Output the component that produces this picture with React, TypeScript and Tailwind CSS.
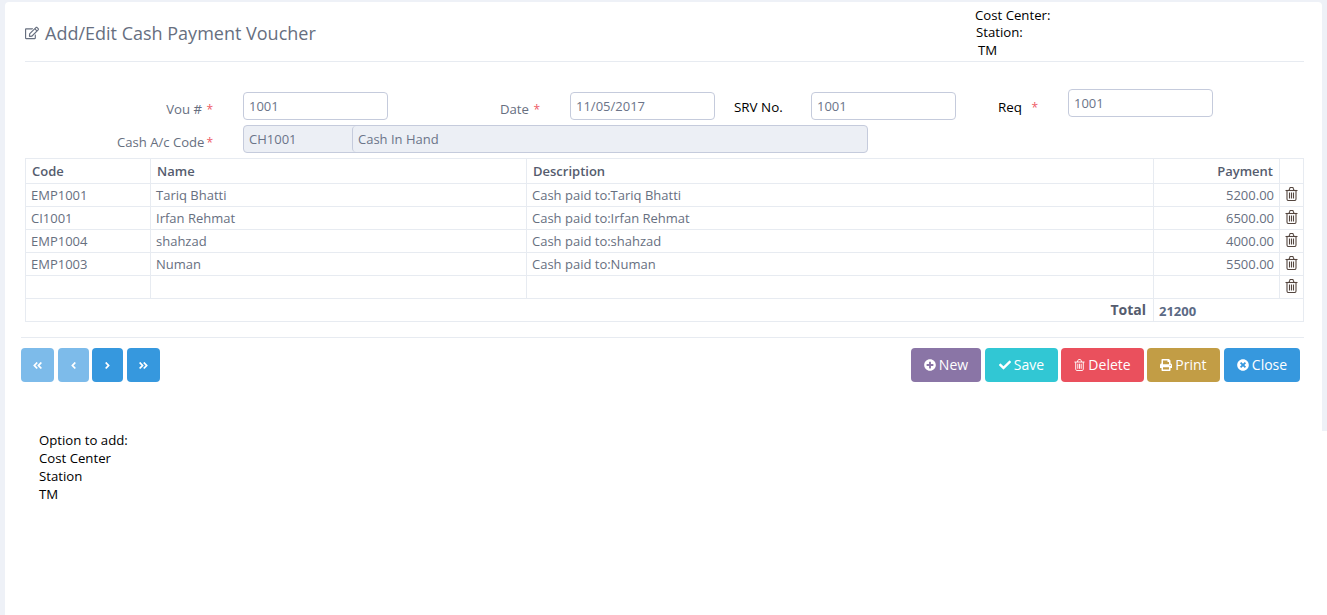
import React from "react";
import {
  FaRegEdit,
  FaPlusCircle,
  FaCheck,
  FaPrint,
  FaTimesCircle,
  FaAngleDoubleLeft,
  FaAngleDoubleRight,
  FaAngleLeft,
  FaAngleRight,
} from "react-icons/fa";

const font = "font-['Open_Sans','Noto_Sans',sans-serif]";

const rows = [
  ["EMP1001", "Tariq Bhatti", "Cash paid to:Tariq Bhatti", "5200.00"],
  ["CI1001", "Irfan Rehmat", "Cash paid to:Irfan Rehmat", "6500.00"],
  ["EMP1004", "shahzad", "Cash paid to:shahzad", "4000.00"],
  ["EMP1003", "Numan", "Cash paid to:Numan", "5500.00"],
  ["", "", "", ""],
];

function Trash({ className }: { className: string }) {
  return (
    <svg viewBox="0 0 13 14" fill="none" stroke="currentColor" strokeWidth="1.1" className={className}>
      <path d="M0.5 3.5H12.5" />
      <path d="M4 3.5L4.8 1.2C4.9 0.8 5.2 0.5 5.6 0.5H7.4C7.8 0.5 8.1 0.8 8.2 1.2L9 3.5" />
      <path d="M2 3.5V12C2 12.9 2.6 13.5 3.3 13.5H9.7C10.4 13.5 11 12.9 11 12V3.5" />
      <path d="M4.5 5.5V11.5M6.5 5.5V11.5M8.5 5.5V11.5" />
    </svg>
  );
}

function Field({ value, className }: { value: string; className: string }) {
  return (
    <div className={`h-[28px] w-[145px] shrink-0 rounded-[4px] border border-[#c5cbdc] bg-white pl-[5px] text-[13px] leading-[27px] text-[#6b7489] ${className}`}>
      {value}
    </div>
  );
}

function Star() {
  return <span className="text-[12px] text-[#ee5a66]">*</span>;
}

function NavBtn({ light, w, children }: { light?: boolean; w: string; children: React.ReactNode }) {
  return (
    <div className={`flex h-[34px] items-center justify-center rounded-[4px] text-[11px] text-white ${light ? "bg-[#7dbbea]" : "bg-[#3698de]"} ${w}`}>
      {children}
    </div>
  );
}

function ActBtn({ color, w, icon, label }: { color: string; w: string; icon: React.ReactNode; label: string }) {
  return (
    <div className={`flex h-[34px] items-center justify-center gap-[3px] rounded-[4px] pb-[1px] text-[14px] text-white ${color} ${w}`}>
      {icon}
      <span>{label}</span>
    </div>
  );
}

const cell = "border border-[#e7ebf1] pt-[2px] align-middle";

export default function App() {
  return (
    <div className={`min-h-[615px] bg-white ${font}`}>
      <div className="h-[431px] bg-[#eef1f7] pl-[5px] pr-[5px] pt-[2px]">
        <div className="h-[429px] rounded-t-[4px] bg-white pl-[16px] pr-[18px]">
          <div className="ml-[4px] flex h-[60px] items-start justify-between border-b border-[#e7ebf1]">
            <div className="mt-[18px] flex items-center gap-[6px] text-[18px] leading-[26px] text-[#676f7f]">
              <FaRegEdit className="text-[14px]" />
              <span>Add/Edit Cash Payment Voucher</span>
            </div>
            <div className="mr-[206px] w-[123px] pt-[5px] text-[13.2px] leading-[17.5px] text-black">
              <div>Cost Center:</div>
              <div className="-mt-[1px] pl-[1px]">Station:</div>
              <div className="mt-[1px] pl-[3px]">TM</div>
            </div>
          </div>

          <div className="mt-[27px] flex h-[36px] items-start text-[13px] text-[#676f7f]">
            <div className="mt-[10px] w-[222px] shrink-0 pr-[30px] text-right text-[13.2px] leading-[20px]">
              Vou # <span className="ml-[1px]"><Star /></span>
            </div>
            <Field value="1001" className="mt-[3px]" />
            <div className="mt-[10px] w-[182px] shrink-0 pr-[30px] text-right text-[13.2px] leading-[20px]">
              Date <span className="ml-[1px]"><Star /></span>
            </div>
            <Field value="11/05/2017" className="mt-[3px]" />
            <div className="mt-[8px] w-[96px] shrink-0 pl-[19px] text-[13.4px] font-medium leading-[20px] text-black">SRV No.</div>
            <Field value="1001" className="mt-[3px]" />
            <div className="mt-[8px] w-[112px] shrink-0 pl-[42px] text-[13.4px] font-medium leading-[20px] text-black">
              Req <span className="ml-[6px] font-normal"><Star /></span>
            </div>
            <Field value="1001" />
          </div>

          <div className="flex h-[33px] items-start text-[13px] text-[#676f7f]">
            <div className="mt-[7px] w-[222px] shrink-0 pr-[30px] text-right text-[13.1px] leading-[20px]">
              Cash A/c Code<span className="ml-[2px]"><Star /></span>
            </div>
            <div className="flex h-[28px] w-[625px] rounded-[4px] border border-[#c5cbdc] bg-[#ecEff5] leading-[26px] text-[#6b7489]">
              <div className="w-[108px] pl-[5px]">CH1001</div>
              <div className="flex-1 rounded-l-[4px] border-l border-[#c5cbdc] pl-[5px]">Cash In Hand</div>
            </div>
          </div>

          <table className="ml-[4px] w-[1278px] table-fixed border-collapse text-[13px] text-[#676f7f]">
            <colgroup>
              <col className="w-[125px]" />
              <col className="w-[376px]" />
              <col className="w-[627px]" />
              <col className="w-[126px]" />
              <col className="w-[24px]" />
            </colgroup>
            <thead>
              <tr className="h-[25px] font-semibold text-[#555c6e]">
                <th className={`${cell} px-[6px] text-left font-semibold`}>Code</th>
                <th className={`${cell} px-[6px] text-left font-semibold`}>Name</th>
                <th className={`${cell} px-[6px] text-left font-semibold`}>Description</th>
                <th className={`${cell} px-[6px] text-right font-semibold`}>Payment</th>
                <th className={cell}></th>
              </tr>
            </thead>
            <tbody>
              {rows.map((r, i) => (
                <tr key={i} className="h-[23px]">
                  <td className={`${cell} px-[5px]`}>{r[0]}</td>
                  <td className={`${cell} px-[5px]`}>{r[1]}</td>
                  <td className={`${cell} px-[5px]`}>{r[2]}</td>
                  <td className={`${cell} px-[5px] text-right`}>{r[3]}</td>
                  <td className="border border-[#e7ebf1] pb-[2px] pl-[5px] align-middle">
                    <Trash className="h-[14px] w-[13px] text-[#54463f]" />
                  </td>
                </tr>
              ))}
              <tr className="h-[23px]">
                <td colSpan={3} className="border border-[#e7ebf1] px-[7px] align-middle text-right text-[14px] leading-[20px] font-bold text-[#555c6e]">Total</td>
                <td colSpan={2} className="border border-[#e7ebf1] px-[5px] pt-[1px] align-middle text-[13px] leading-[20px] font-bold text-[#5b6a85]">21200</td>
              </tr>
            </tbody>
          </table>

          <div className="mt-[15px] border-t border-[#e7ebf1] pt-[10px] pr-[4px]">
            <div className="flex items-center justify-between">
              <div className="flex">
                <NavBtn light w="w-[33px] mr-[4px]"><FaAngleDoubleLeft /></NavBtn>
                <NavBtn light w="w-[31px] mr-[3px]"><FaAngleLeft /></NavBtn>
                <NavBtn w="w-[31px] mr-[4px]"><FaAngleRight /></NavBtn>
                <NavBtn w="w-[33px]"><FaAngleDoubleRight /></NavBtn>
              </div>
              <div className="flex">
                <ActBtn color="bg-[#8a75a6] mr-[4px]" w="w-[70px]" icon={<FaPlusCircle className="text-[12px]" />} label="New" />
                <ActBtn color="bg-[#31c7d4] mr-[3px]" w="w-[73px]" icon={<FaCheck className="text-[12px]" />} label="Save" />
                <ActBtn color="bg-[#ea505d] mr-[3px]" w="w-[83px]" icon={<Trash className="h-[12px] w-[11px]" />} label="Delete" />
                <ActBtn color="bg-[#c29d45] mr-[4px]" w="w-[73px]" icon={<FaPrint className="text-[12px]" />} label="Print" />
                <ActBtn color="bg-[#3698de]" w="w-[76px]" icon={<FaTimesCircle className="text-[12px]" />} label="Close" />
              </div>
            </div>
          </div>
        </div>
      </div>
      <div className="h-[184px] bg-[#eef1f7] pl-[5px]">
        <div className="h-full bg-white pl-[34px] text-[13.2px] leading-[18px] text-black">
          <div>Option to add:</div>
          <div>Cost Center</div>
          <div>Station</div>
          <div>TM</div>
        </div>
      </div>
    </div>
  );
}
